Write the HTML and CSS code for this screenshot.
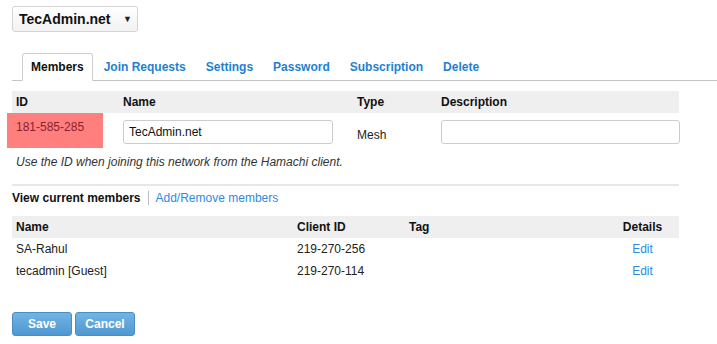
FILE: index.html
```html
<!DOCTYPE html>
<html lang="en">
<head>
  <meta charset="UTF-8">
  <meta name="viewport" content="width=device-width, initial-scale=1.0">
  <title>TecAdmin.net - Members</title>
  <link rel="stylesheet" href="styles.css">
</head>
<body>
  <div class="page">
    <div class="network-select">
      <span class="network-name">TecAdmin.net</span>
      <span class="caret">&#9660;</span>
    </div>

    <ul class="tabs">
      <li class="tab active">Members</li>
      <li class="tab">Join Requests</li>
      <li class="tab">Settings</li>
      <li class="tab">Password</li>
      <li class="tab">Subscription</li>
      <li class="tab">Delete</li>
    </ul>

    <table class="grid network">
      <thead>
        <tr>
          <th class="col-id">ID</th>
          <th class="col-name">Name</th>
          <th class="col-type">Type</th>
          <th>Description</th>
        </tr>
      </thead>
      <tbody>
        <tr>
          <td class="id-cell"><div class="id-mark">181-585-285</div></td>
          <td><input class="field name-field" type="text" value="TecAdmin.net"></td>
          <td class="type">Mesh</td>
          <td><input class="field desc-field" type="text" value=""></td>
        </tr>
      </tbody>
    </table>

    <p class="note">Use the ID when joining this network from the Hamachi client.</p>

    <div class="divider"></div>

    <div class="member-nav">
      <span class="current">View current members</span>
      <span class="sep"></span>
      <a class="link">Add/Remove members</a>
    </div>

    <table class="grid members">
      <thead>
        <tr>
          <th class="col-mname">Name</th>
          <th class="col-client">Client ID</th>
          <th class="col-tag">Tag</th>
          <th class="col-details">Details</th>
        </tr>
      </thead>
      <tbody>
        <tr>
          <td>SA-Rahul</td>
          <td>219-270-256</td>
          <td></td>
          <td class="col-details"><a class="link">Edit</a></td>
        </tr>
        <tr>
          <td>tecadmin [Guest]</td>
          <td>219-270-114</td>
          <td></td>
          <td class="col-details"><a class="link">Edit</a></td>
        </tr>
      </tbody>
    </table>

    <div class="actions">
      <button class="btn">Save</button>
      <button class="btn">Cancel</button>
    </div>
  </div>
</body>
</html>
```

FILE: styles.css
```css
body {
  margin: 0;
  font-family: "Liberation Sans", Arial, sans-serif;
  font-size: 12px;
  color: #222;
  background-color: #fff;
}
.page {
  padding: 6px 0 0 12px;
}
.network-select {
  box-sizing: border-box;
  width: 126px;
  height: 26px;
  display: flex;
  align-items: center;
  justify-content: space-between;
  padding: 0 5px 0 6px;
  border: 1px solid #d4d4d4;
  border-radius: 3px;
  background: linear-gradient(#ffffff, #f2f2f2);
}
.network-name {
  font-size: 14px;
  font-weight: bold;
  color: #111;
}
.caret {
  font-size: 9px;
  color: #222;
}
.tabs {
  display: flex;
  list-style: none;
  margin: 21px 0 0 0;
  padding: 0 0 0 10px;
  border-bottom: 1px solid #c4c4c4;
}
.tab {
  height: 26px;
  line-height: 26px;
  padding: 0 8px;
  margin-right: 2px;
  margin-bottom: -1px;
  border: 1px solid transparent;
  font-weight: bold;
  color: #1e7fd2;
}
.tab.active {
  color: #111;
  background-color: #fff;
  border-color: #cfcfcf;
  border-bottom-color: #fff;
  border-radius: 3px 3px 0 0;
}
.grid {
  width: 667px;
  border-collapse: collapse;
  table-layout: fixed;
}
.grid th {
  height: 22px;
  padding: 0 4px;
  text-align: left;
  font-weight: bold;
  color: #111;
  background-color: #efefef;
}
.grid td {
  padding: 0 4px;
}
.network {
  margin-top: 10px;
}
.col-id { width: 99px; }
.col-name { width: 226px; }
.col-type { width: 76px; }
.network td {
  vertical-align: middle;
}
.network td.id-cell {
  padding: 0;
  vertical-align: top;
}
.id-mark {
  width: 78px;
  height: 14px;
  margin-left: -5px;
  padding: 7px 9px 14px 9px;
  background-color: #ff7f7f;
  color: #8a1f2e;
  line-height: 14px;
}
.network td.type {
  padding-top: 9px;
  color: #222;
}
.field {
  box-sizing: border-box;
  height: 24px;
  margin-top: 2px;
  padding: 0 5px;
  border: 1px solid #cccccc;
  border-radius: 3px;
  font-family: "Liberation Sans", Arial, sans-serif;
  font-size: 12px;
  color: #111;
}
.name-field { width: 210px; }
.desc-field { width: 239px; }
.note {
  margin: 7px 0 0 4px;
  line-height: 14px;
  font-style: italic;
  color: #333;
}
.divider {
  width: 667px;
  height: 2px;
  margin-top: 15px;
  background-color: #e6e6eb;
}
.member-nav {
  display: flex;
  align-items: center;
  height: 16px;
  margin-top: 4px;
}
.current {
  font-weight: bold;
  color: #111;
}
.sep {
  width: 1px;
  height: 14px;
  margin: 0 7px;
  background-color: #bbb;
}
.link {
  color: #2f8ade;
  text-decoration: none;
  cursor: pointer;
}
.members {
  margin-top: 10px;
}
.members td {
  height: 22px;
  color: #222;
}
.col-mname { width: 273px; }
.col-client { width: 104px; }
.col-tag { width: 193px; }
.grid .col-details {
  text-align: center;
}
.actions {
  display: flex;
  gap: 3px;
  margin-top: 30px;
}
.btn {
  width: 60px;
  height: 24px;
  border: 1px solid #4b8ec6;
  border-radius: 3px;
  background: linear-gradient(#72b4e4, #4f98d2);
  color: #fff;
  font-family: "Liberation Sans", Arial, sans-serif;
  font-size: 12px;
  font-weight: bold;
  cursor: pointer;
}
```
